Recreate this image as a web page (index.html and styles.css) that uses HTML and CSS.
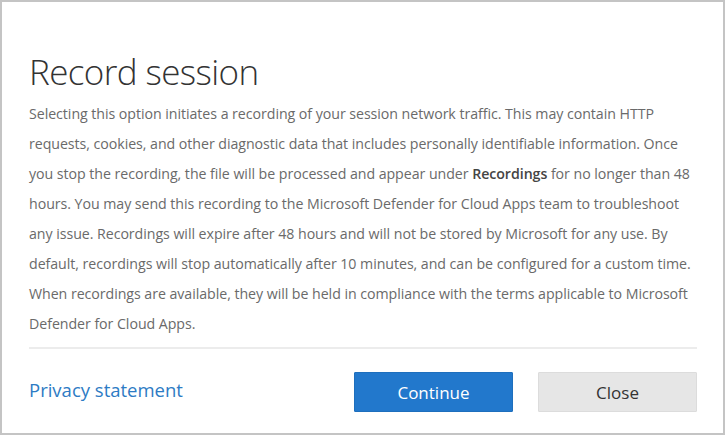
FILE: index.html
```html
<!DOCTYPE html>
<html lang="en">
<head>
<meta charset="utf-8">
<title>Record session</title>
<link rel="stylesheet" href="styles.css">
</head>
<body>
<div class="dialog">
  <h1 class="title">Record session</h1>
  <p class="desc">Selecting this option initiates a recording of your session network traffic. This may contain HTTP<br>
requests, cookies, and other diagnostic data that includes personally identifiable information. Once<br>
you stop the recording, the file will be processed and appear under <b>Recordings</b> for no longer than 48<br>
hours. You may send this recording to the Microsoft Defender for Cloud Apps team to troubleshoot<br>
any issue. Recordings will expire after 48 hours and will not be stored by Microsoft for any use. By<br>
default, recordings will stop automatically after 10 minutes, and can be configured for a custom time.<br>
When recordings are available, they will be held in compliance with the terms applicable to Microsoft<br>
Defender for Cloud Apps.</p>
  <div class="footer">
    <a class="privacy" href="#">Privacy statement</a>
    <div class="actions">
      <button class="btn btn-primary">Continue</button>
      <button class="btn btn-default">Close</button>
    </div>
  </div>
</div>
</body>
</html>
```
FILE: styles.css
```css
html, body {
  margin: 0;
  padding: 0;
  background: #ffffff;
}
.dialog {
  box-sizing: border-box;
  width: 725px;
  height: 435px;
  border: 2px solid #c4c4c4;
  padding: 46px 26px 0 27px;
  font-family: "Open Sans", "Noto Sans", sans-serif;
  color: #666666;
}
.title {
  margin: 0;
  font-weight: 300;
  font-size: 35px;
  line-height: 48px;
  color: #333333;
  letter-spacing: -0.6px;
}
.desc {
  margin: 3px 0 0 0;
  font-size: 14.2px;
  line-height: 30px;
  color: #6a6a6a;
  letter-spacing: -0.05px;
  white-space: nowrap;
}
.desc b {
  color: #444444;
  font-weight: 600;
}
.footer {
  margin-top: 8px;
  border-top: 2px solid #ececec;
  padding-top: 23px;
  display: flex;
  align-items: center;
  justify-content: space-between;
}
.privacy {
  font-size: 18.5px;
  color: #2d7bc4;
  text-decoration: none;
  margin-top: -6px;
}
.actions {
  display: flex;
  gap: 25px;
}
.btn {
  box-sizing: border-box;
  width: 159px;
  height: 40px;
  font-family: "Open Sans", "Noto Sans", sans-serif;
  font-size: 17px;
  border-radius: 1px;
  cursor: pointer;
}
.btn-primary {
  background: #2278cc;
  border: 1px solid #1e6fbd;
  color: #ffffff;
}
.btn-default {
  background: #e6e6e6;
  border: 1px solid #dcdcdc;
  color: #333333;
}
```
